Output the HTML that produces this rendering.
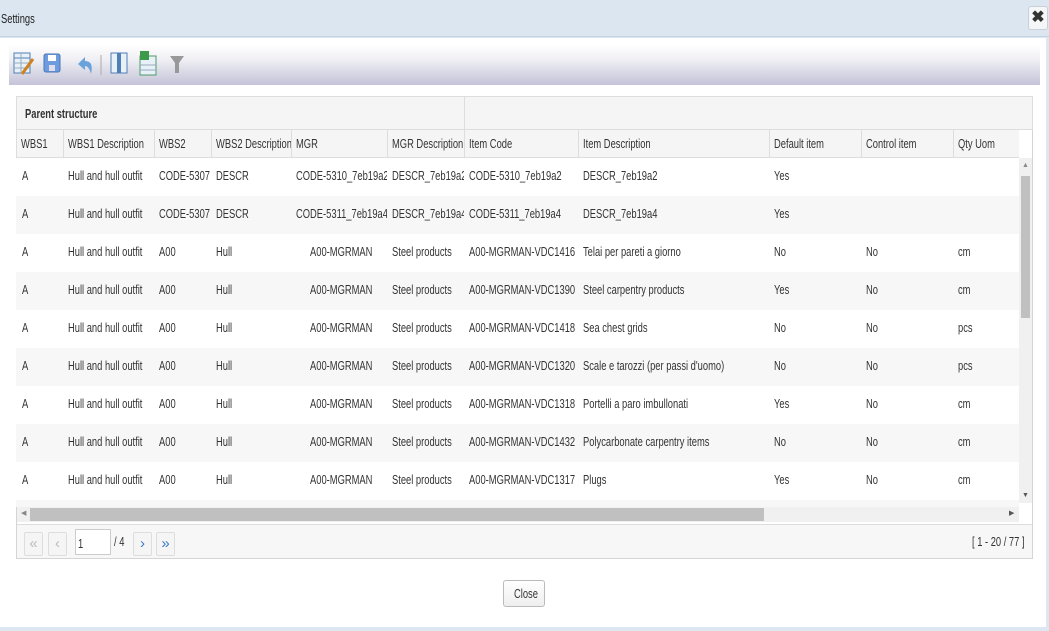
<!DOCTYPE html>
<html><head><meta charset="utf-8"><style>
*{margin:0;padding:0;box-sizing:border-box}
body{width:1049px;height:631px;background:#dde7f1;font-family:"Liberation Sans",sans-serif;font-size:13px;color:#333;position:relative;overflow:hidden}
.abs{position:absolute}
s{text-decoration:none;display:inline-block;transform:scaleX(.72);transform-origin:0 50%;white-space:nowrap}
.title{left:0;top:0;width:1049px;height:37px;background:#dce6f0;border-bottom:1px solid #c5d3e0}
.title span{position:absolute;left:1px;top:11px;color:#222}
.xbtn{left:1028px;top:6px;width:20px;height:24px;background:#f4f6f8;border:1px solid #c8d0d8;border-radius:3px;font-weight:bold;font-size:16px;text-align:center;line-height:22px;color:#333}
.dlg{left:0;top:38px;width:1046px;height:589px;background:#fff}
.tb{left:9px;top:45px;width:1031px;height:40px;background:linear-gradient(#fff 0%,#f0f0f5 35%,#c4c3d8 100%)}
.grid{left:16px;top:96px;width:1017px;height:463px;border:1px solid #d5d5d5;background:#fff}
.grp{left:16px;top:96px;width:1017px;height:34px;background:#f5f5f5;border:1px solid #ddd;border-bottom:1px solid #ddd}
.grp b{position:absolute;left:8px;top:9px;font-weight:bold;color:#333}
.grp i{position:absolute;left:447px;top:0;width:1px;height:34px;background:#ddd}
.hdr{left:16px;top:130px;width:1003px;height:28px;background:#f5f5f5;border-bottom:1px solid #ddd;border-left:1px solid #ddd}
.hc{position:absolute;top:0;height:28px;line-height:28px;padding-left:4px;border-right:1px solid #ddd;white-space:nowrap;overflow:hidden}
.row{position:absolute;left:16px;width:1003px;height:38px}
.c{position:absolute;top:0;height:38px;line-height:36px;padding-left:6px;white-space:nowrap;overflow:hidden}
.vs{left:1019px;top:158px;width:13px;height:345px;background:#f0f0f0}
.hs{left:17px;top:507px;width:1002px;height:15px;background:#f0f0f0}
.pg{left:17px;top:524px;width:1015px;height:34px;background:#f7f7f7;border-top:1px solid #ddd}
.pb{position:absolute;top:7px;width:19px;height:24px;border:1px solid #ddd;border-radius:2px;background:#f5f5f5;text-align:center;line-height:21px;font-size:15px;color:#3a7cc2}
</style></head><body>
<div class="abs title"><span><s>Settings</s></span></div>
<div class="abs xbtn">✖</div>
<div class="abs dlg"></div>
<div class="abs tb">
<svg width="190" height="40" style="position:absolute;left:0;top:0">
<rect x="5" y="8" width="16" height="20" fill="#e8f0f8" stroke="#4f7fb5"/><line x1="5" y1="13" x2="21" y2="13" stroke="#4f7fb5"/><line x1="5" y1="18" x2="21" y2="18" stroke="#9ab"/><line x1="5" y1="23" x2="21" y2="23" stroke="#9ab"/><line x1="12" y1="8" x2="12" y2="28" stroke="#9ab"/><line x1="24" y1="14" x2="13" y2="29" stroke="#d08020" stroke-width="3"/>
<rect x="35" y="9" width="16" height="18" rx="2" fill="#6d9be0" stroke="#4a75b8"/><rect x="39" y="10" width="8" height="6" fill="#fff"/><rect x="40" y="20" width="6" height="6" fill="#dde"/>
<path d="M69 19 L76 12 L76 16 Q85 16 82 29 Q80 21 76 21 L76 25 Z" fill="#6aa2dc"/>
<line x1="92" y1="10" x2="92" y2="30" stroke="#aaa"/>
<rect x="102" y="8" width="16" height="20" fill="#e8f0f8" stroke="#4f7fb5"/><rect x="108" y="8" width="4" height="20" fill="#4f7fb5"/>
<rect x="131" y="11" width="16" height="19" fill="#e8f0f8" stroke="#4f9a6a"/><rect x="131" y="6" width="9" height="9" fill="#3c9a4a"/><line x1="131" y1="20" x2="147" y2="20" stroke="#9ab"/><line x1="131" y1="25" x2="147" y2="25" stroke="#9ab"/>
<path d="M161 11 L175 11 L170 18 L170 28 L166 28 L166 18 Z" fill="#999"/>
</svg></div>
<div class="abs grid"></div>
<div class="abs grp"><b><s>Parent structure</s></b><i></i></div>
<div class="abs hdr">
<div class="hc" style="left:0;width:47px"><s>WBS1</s></div>
<div class="hc" style="left:47px;width:91px"><s>WBS1 Description</s></div>
<div class="hc" style="left:138px;width:57px"><s>WBS2</s></div>
<div class="hc" style="left:195px;width:80px"><s>WBS2 Description</s></div>
<div class="hc" style="left:275px;width:96px"><s>MGR</s></div>
<div class="hc" style="left:371px;width:77px"><s>MGR Description</s></div>
<div class="hc" style="left:448px;width:114px"><s>Item Code</s></div>
<div class="hc" style="left:562px;width:191px"><s>Item Description</s></div>
<div class="hc" style="left:753px;width:92px"><s>Default item</s></div>
<div class="hc" style="left:845px;width:92px"><s>Control item</s></div>
<div class="hc" style="left:937px;width:66px;border:0"><s>Qty Uom</s></div>
</div>
<div id="rows"></div>
<div class="abs vs"><div style="position:absolute;left:2px;top:18px;width:9px;height:142px;background:#c0c0c0"></div><div style="position:absolute;left:3px;top:4px;font-size:7px;color:#888">▲</div><div style="position:absolute;left:3px;top:334px;font-size:7px;color:#555">▼</div></div>
<div class="abs hs"><div style="position:absolute;left:13px;top:1px;width:734px;height:13px;background:#c0c0c0"></div><div style="position:absolute;left:4px;top:2px;font-size:7px;color:#888">◀</div><div style="position:absolute;left:992px;top:2px;font-size:7px;color:#555">▶</div></div>
<div class="abs pg">
<div class="pb" style="left:7px;color:#bbb">«</div>
<div class="pb" style="left:31px;color:#bbb">‹</div>
<div style="position:absolute;left:58px;top:4px;width:36px;height:26px;border:1px solid #ccc;background:#fff;padding:6px 0 0 2px"><s>1</s></div>
<div style="position:absolute;left:97px;top:9px"><s>/ 4</s></div>
<div class="pb" style="left:116px">›</div>
<div class="pb" style="left:139px">»</div>
<div style="position:absolute;left:955px;top:9px"><s>[ 1 - 20 / 77 ]</s></div>
</div>
<div class="abs" style="left:503px;top:580px;width:42px;height:27px;border:1px solid #bbb;border-radius:3px;background:linear-gradient(#fff,#eee);line-height:25px;padding-left:10px"><s>Close</s></div>
<script>
var d=[
["A","Hull and hull outfit","CODE-5307","DESCR","CODE-5310_7eb19a2","DESCR_7eb19a2","CODE-5310_7eb19a2","DESCR_7eb19a2","Yes","",""],
["A","Hull and hull outfit","CODE-5307","DESCR","CODE-5311_7eb19a4","DESCR_7eb19a4","CODE-5311_7eb19a4","DESCR_7eb19a4","Yes","",""],
["A","Hull and hull outfit","A00","Hull","A00-MGRMAN","Steel products","A00-MGRMAN-VDC1416","Telai per pareti a giorno","No","No","cm"],
["A","Hull and hull outfit","A00","Hull","A00-MGRMAN","Steel products","A00-MGRMAN-VDC1390","Steel carpentry products","Yes","No","cm"],
["A","Hull and hull outfit","A00","Hull","A00-MGRMAN","Steel products","A00-MGRMAN-VDC1418","Sea chest grids","No","No","pcs"],
["A","Hull and hull outfit","A00","Hull","A00-MGRMAN","Steel products","A00-MGRMAN-VDC1320","Scale e tarozzi (per passi d'uomo)","No","No","pcs"],
["A","Hull and hull outfit","A00","Hull","A00-MGRMAN","Steel products","A00-MGRMAN-VDC1318","Portelli a paro imbullonati","Yes","No","cm"],
["A","Hull and hull outfit","A00","Hull","A00-MGRMAN","Steel products","A00-MGRMAN-VDC1432","Polycarbonate carpentry items","No","No","cm"],
["A","Hull and hull outfit","A00","Hull","A00-MGRMAN","Steel products","A00-MGRMAN-VDC1317","Plugs","Yes","No","cm"]];
var L=[0,47,138,195,275,371,448,562,753,845,937,1003],h="";
d.forEach(function(r,i){h+='<div class="row" style="top:'+(158+i*38)+'px;background:'+(i%2?'#f7f7f7':'#fff')+'">';
r.forEach(function(t,j){var p=(j==4&&i>1)?19:(j==0?6:5);h+='<div class="c" style="left:'+L[j]+'px;width:'+(L[j+1]-L[j])+'px;padding-left:'+p+'px"><s>'+t+'</s></div>'});h+='</div>'});
h+='<div class="row" style="top:500px;height:7px;background:#f7f7f7"></div>';
document.getElementById('rows').innerHTML=h;
</script>
</body></html>
